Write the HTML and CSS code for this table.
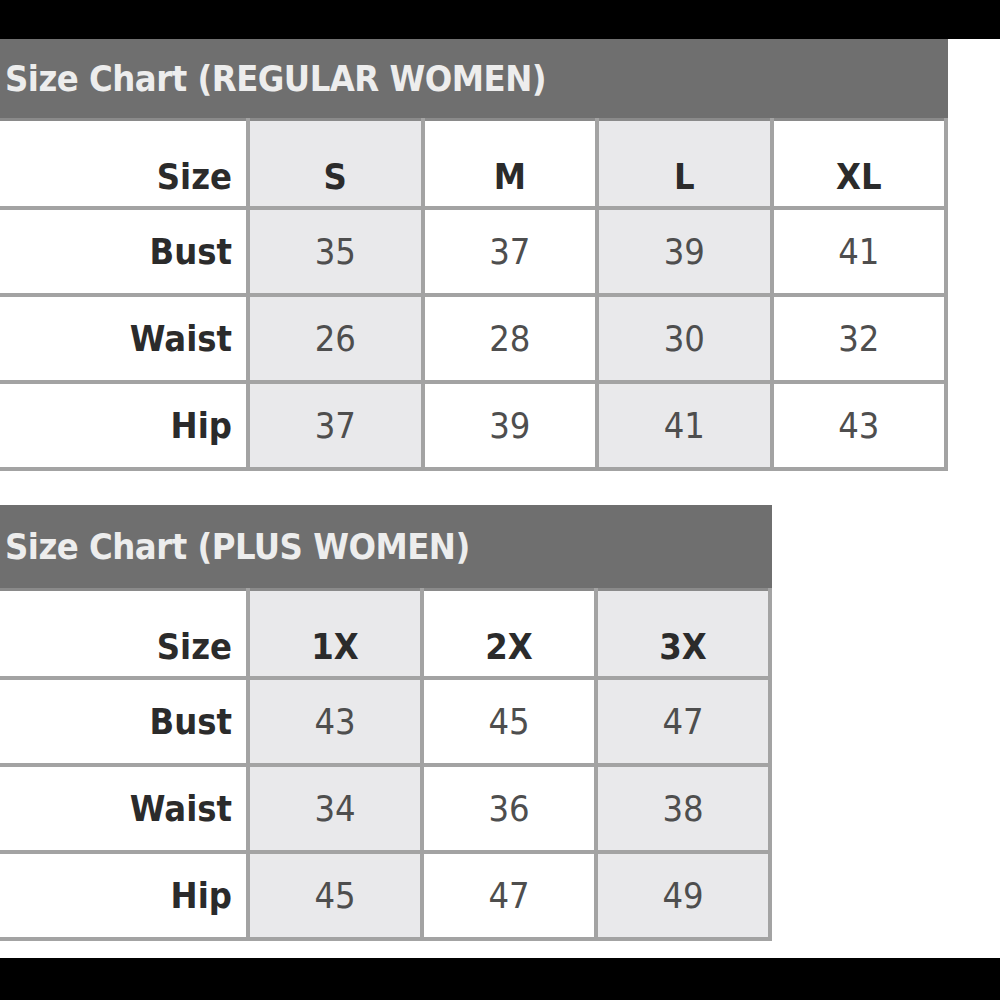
FILE: index.html
```html
<!DOCTYPE html>
<html>
<head>
<meta charset="utf-8">
<link rel="stylesheet" href="styles.css">
</head>
<body>
<div class="bar-top"></div>
<main class="page">
  <section class="chart chart-regular">
    <div class="chart-title">Size Chart (REGULAR WOMEN)</div>
    <table class="grid">
      <colgroup><col class="c-label"><col class="c-val"><col class="c-val"><col class="c-val"><col class="c-val"></colgroup>
      <tr class="head"><th>Size</th><td class="shade">S</td><td>M</td><td class="shade">L</td><td>XL</td></tr>
      <tr><th>Bust</th><td class="shade">35</td><td>37</td><td class="shade">39</td><td>41</td></tr>
      <tr><th>Waist</th><td class="shade">26</td><td>28</td><td class="shade">30</td><td>32</td></tr>
      <tr><th>Hip</th><td class="shade">37</td><td>39</td><td class="shade">41</td><td>43</td></tr>
    </table>
  </section>
  <section class="chart chart-plus">
    <div class="chart-title">Size Chart (PLUS WOMEN)</div>
    <table class="grid">
      <colgroup><col class="c-label"><col class="c-val"><col class="c-val"><col class="c-val"></colgroup>
      <tr class="head"><th>Size</th><td class="shade">1X</td><td>2X</td><td class="shade">3X</td></tr>
      <tr><th>Bust</th><td class="shade">43</td><td>45</td><td class="shade">47</td></tr>
      <tr><th>Waist</th><td class="shade">34</td><td>36</td><td class="shade">38</td></tr>
      <tr><th>Hip</th><td class="shade">45</td><td>47</td><td class="shade">49</td></tr>
    </table>
  </section>
</main>
<div class="bar-bottom"></div>
</body>
</html>
```
FILE: styles.css
```css
html, body { margin: 0; padding: 0; background: #fff; }
body { width: 1000px; height: 1000px; overflow: hidden; display: flex; flex-direction: column; font-family: "DejaVu Sans Condensed", "DejaVu Sans", sans-serif; }
.bar-top { height: 39px; background: #000; flex: none; }
.bar-bottom { height: 42px; background: #000; flex: none; margin-top: auto; }
.page { flex: 1; display: flex; flex-direction: column; }
.chart-regular { width: 948px; }
.chart-plus { width: 772px; margin-top: 34px; }
.chart-title { background: #6f6f6f; color: #ededed; font-weight: bold; font-size: 36px; height: 79px; line-height: 79px; padding-left: 5px; letter-spacing: -0.5px; white-space: nowrap; overflow: hidden; }
.chart-plus .chart-title { height: 83px; line-height: 83px; }
.grid { border-collapse: collapse; table-layout: fixed; width: 100%; }
.c-label { width: 248px; }
.grid th, .grid td { border: 4px solid #a3a3a3; height: 83px; padding: 0; font-size: 36px; }
.grid tr:first-child th, .grid tr:first-child td { border-top: 3px solid #8a8a8a; padding-top: 26px; height: 59px; }
.grid th { border-left: none; text-align: right; padding-right: 14px; color: #2b2b2b; font-weight: bold; }
.grid td { text-align: center; color: #4e4e4e; background: #fff; }
.grid td.shade { background: #e9e9eb; }
.grid tr.head td { color: #2b2b2b; font-weight: bold; }
```
